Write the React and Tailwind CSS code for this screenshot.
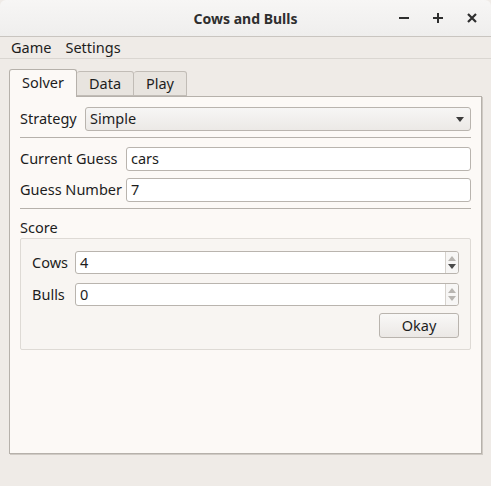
import React from 'react';

const font = { fontFamily: '"Noto Sans", "DejaVu Sans", sans-serif' };

const Arrow = ({ up, dark }) => (
  <svg width="8" height="5" viewBox="0 0 8 5">
    <path d={up ? 'M0 5 L4 0 L8 5 Z' : 'M0 0 L4 5 L8 0 Z'} fill={dark ? '#4a4a4a' : '#b8b5b1'} />
  </svg>
);

const SpinBox = ({ value, upDark, downDark }) => (
  <div className="flex flex-1 h-[23px] border border-[#b9b4ae] rounded-[3px] bg-white">
    <div className="flex-1 flex items-center pl-[4px] text-[14.5px] text-[#1d1d1d]">{value}</div>
    <div className="w-[13px] border-l border-[#d6d2cd] flex flex-col items-center justify-center gap-[3px] bg-[#f7f6f5] rounded-r-[3px]">
      <Arrow up dark={upDark} />
      <Arrow dark={downDark} />
    </div>
  </div>
);

const TextBox = ({ value }) => (
  <div className="flex-1 h-[24px] border border-[#b9b4ae] rounded-[3px] bg-white flex items-center pl-[4px] text-[#1d1d1d]">
    {value}
  </div>
);

export default function App() {
  return (
    <div className="w-[491px] h-[486px] bg-[#efebe7] flex flex-col text-[#1d1d1d] select-none overflow-hidden" style={font}>
      {/* title bar */}
      <div className="h-[37px] shrink-0 relative flex items-center justify-center bg-gradient-to-b from-[#f7f6f5] to-[#efeeed] border-b border-[#c9c5c0] rounded-t-[6px]">
        <span className="text-[14px] font-bold text-[#2e2e2e]">Cows and Bulls</span>
        <div className="absolute right-[13px] top-0 h-full flex items-center gap-[22px] text-[#2e2e2e]">
          <svg width="12" height="12" viewBox="0 0 12 12"><rect x="1" y="5" width="10" height="2" fill="#2e2e2e" /></svg>
          <svg width="12" height="12" viewBox="0 0 12 12"><rect x="1" y="5" width="10" height="2" fill="#2e2e2e" /><rect x="5" y="1" width="2" height="10" fill="#2e2e2e" /></svg>
          <svg width="12" height="12" viewBox="0 0 12 12"><path d="M2 2 L10 10 M10 2 L2 10" stroke="#2e2e2e" strokeWidth="2.2" /></svg>
        </div>
      </div>

      {/* menu bar */}
      <div className="h-[22px] shrink-0 flex items-center gap-[14px] pl-[11px] text-[14.5px] border-b border-[#dad6d1]">
        <span>Game</span>
        <span>Settings</span>
      </div>

      {/* tabs */}
      <div className="flex-1 flex flex-col px-[9px] pt-[9px] pb-[32px] text-[14.5px]">
        <div className="flex items-end h-[28px]">
          <div className="h-[28px] w-[68px] flex items-center justify-center bg-[#fcf9f6] border border-b-0 border-[#b6b1ab] rounded-t-[3px] relative z-10 -mb-px pb-[2px]">Solver</div>
          <div className="h-[25px] w-[57px] flex items-center justify-center bg-[#e8e4df] border border-l-0 border-[#c1bcb6] rounded-t-[3px]">Data</div>
          <div className="h-[25px] w-[53px] flex items-center justify-center bg-[#e8e4df] border border-l-0 border-[#c1bcb6] rounded-t-[3px]">Play</div>
        </div>

        <div className="flex-1 bg-[#fcf9f6] border border-[#b6b1ab] shadow-[1px_1px_0_#cfcac4] px-[10px] pt-[10px]">
          <div className="flex items-center h-[24px]">
            <span className="w-[65px] shrink-0">Strategy</span>
            <div className="flex-1 h-[24px] border border-[#b9b4ae] rounded-[3px] bg-gradient-to-b from-[#f7f6f5] to-[#ece9e6] flex items-center justify-between pl-[4px] pr-[6px]">
              <span>Simple</span>
              <svg width="8" height="5" viewBox="0 0 8 5"><path d="M0 0 L4 5 L8 0 Z" fill="#3b3b3b" /></svg>
            </div>
          </div>
          <div className="h-px bg-[#b6b1ab] mt-[6px] mb-[9px]" />

          <div className="flex items-center">
            <span className="w-[106px] shrink-0">Current Guess</span>
            <TextBox value="cars" />
          </div>
          <div className="flex items-center mt-[7px]">
            <span className="w-[106px] shrink-0">Guess Number</span>
            <TextBox value="7" />
          </div>
          <div className="h-px bg-[#b6b1ab] mt-[6px]" />

          <div className="mt-[9px] leading-[18px]">Score</div>
          <div className="mt-[2px] h-[112px] border border-[#dedad5] rounded-[2px] bg-[#f8f5f2] px-[11px] pt-[12px]">
            <div className="flex items-center">
              <span className="w-[43px] shrink-0">Cows</span>
              <SpinBox value="4" downDark />
            </div>
            <div className="flex items-center mt-[9px]">
              <span className="w-[43px] shrink-0">Bulls</span>
              <SpinBox value="0" />
            </div>
            <div className="flex justify-end mt-[7px]">
              <div className="w-[80px] h-[25px] border border-[#b9b4ae] rounded-[3px] bg-gradient-to-b from-[#f9f8f7] to-[#ebe8e5] flex items-center justify-center">Okay</div>
            </div>
          </div>
        </div>
      </div>
    </div>
  );
}
